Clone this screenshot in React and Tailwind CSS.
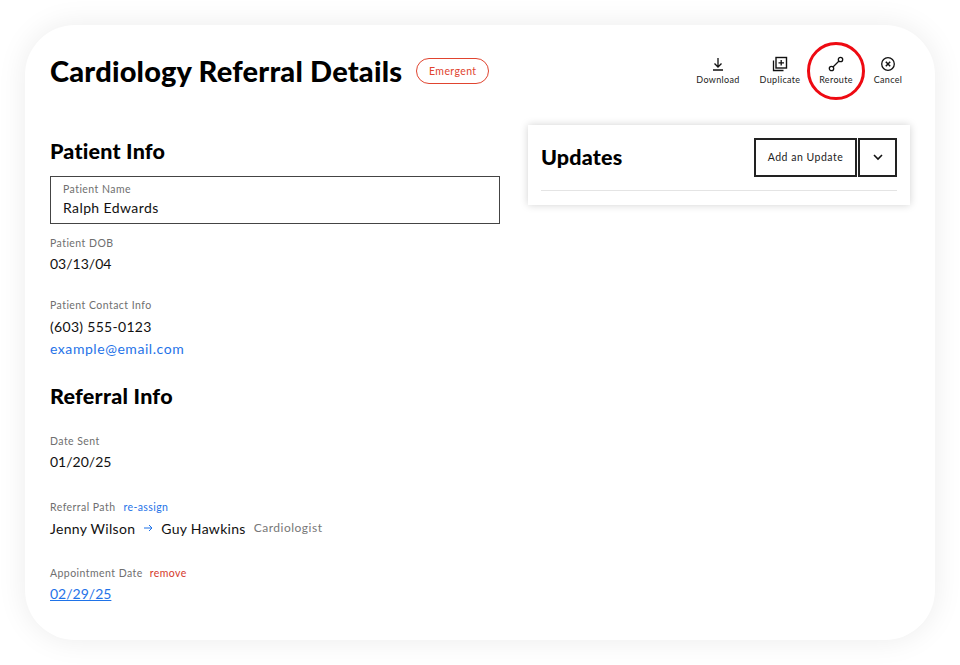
import React from "react";

const F = { fontFamily: '"Lato", "Noto Sans", sans-serif' };

function Label({ children }) {
  return <div className="text-[10.5px] leading-[14px] tracking-[0.45px] text-[#6f6f6f]">{children}</div>;
}
function Action({ label, w, children, circled }) {
  return (
    <div className={`relative flex flex-col items-center ${w}`}>
      <svg width="16" height="16" viewBox="0 0 16 16" fill="none" stroke="#111" strokeWidth="1.3" className="mb-[1px]">{children}</svg>
      <div className="text-[9px] leading-[14px] tracking-[0.35px] text-[#222] whitespace-nowrap">{label}</div>
      {circled && <div className="absolute left-1/2 top-[calc(50%-1px)] -translate-x-1/2 -translate-y-1/2 w-[58px] h-[58px] rounded-full border-[3px] border-[#ee0a12]" />}
    </div>
  );
}

export default function App() {
  return (
    <div className="w-[960px] h-[665px] bg-white p-[25px] overflow-hidden" style={F}>
      <div className="w-[910px] h-[615px] bg-white rounded-[50px] shadow-[0_0_30px_rgba(0,0,0,0.08)] pl-[25px] pr-[25px] pt-[29px]">
        <div className="flex items-start justify-between">
          <div className="flex items-center gap-[14px] h-[34px]">
            <h1 className="text-[29px] leading-[34px] font-black tracking-[0.2px] text-black whitespace-nowrap">Cardiology Referral Details</h1>
            <span className="h-[26px] w-[73px] pt-[1px] flex items-center justify-center rounded-full border-[1.5px] border-[#e0442f] text-[#e0442f] text-[10.5px] tracking-[0.4px]">Emergent</span>
          </div>
          <div className="flex items-start pt-[2px] pr-[7px]">
            <Action label="Download" w="w-[42px] mr-[20px]">
              <path d="M8 2v9M4.5 7.5 8 11l3.5-3.5M3 14h10" />
            </Action>
            <Action label="Duplicate" w="w-[42px] mr-[18px]">
              <path d="M1.5 4.5v10h10" />
              <rect x="4" y="1.5" width="10.5" height="10.5" strokeWidth="1.4" />
              <path d="M9.2 4v5.5M6.5 6.8H12" />
            </Action>
            <Action label="Reroute" w="w-[34px] mr-[20px]" circled>
              <circle cx="3.5" cy="12.5" r="2.2" />
              <circle cx="12.5" cy="3.5" r="2.2" />
              <path d="M5 11 11 5" />
            </Action>
            <Action label="Cancel" w="w-[30px]">
              <circle cx="8" cy="8" r="6.3" />
              <path d="M5.8 5.8l4.4 4.4M10.2 5.8l-4.4 4.4" strokeWidth="1.5" />
            </Action>
          </div>
        </div>

        <div className="flex mt-[37px]">
          <div className="w-[450px] shrink-0 pt-[13px]">
            <h2 className="text-[21.5px] leading-[26px] font-black tracking-[0.2px] text-black">Patient Info</h2>
            <div className="mt-[12px] h-[48px] border border-[#444] pl-[12px] pt-[5px]">
              <Label>Patient Name</Label>
              <div className="text-[14px] leading-[20px] tracking-[0.4px] text-[#111] mt-[2px]">Ralph Edwards</div>
            </div>
            <div className="mt-[12px]"><Label>Patient DOB</Label></div>
            <div className="text-[14px] leading-[20px] text-[#111] mt-[4px]">03/13/04</div>
            <div className="mt-[24px]"><Label>Patient Contact Info</Label></div>
            <div className="text-[14px] leading-[20px] tracking-[0.3px] text-[#111] mt-[5px]">(603) 555-0123</div>
            <div className="text-[14px] leading-[20px] tracking-[0.55px] text-[#1f73e8] mt-[2px]">example@email.com</div>
            <h2 className="mt-[24px] text-[21.5px] leading-[26px] font-black tracking-[0.25px] text-black">Referral Info</h2>
            <div className="mt-[25px]"><Label>Date Sent</Label></div>
            <div className="text-[14px] leading-[20px] text-[#111] mt-[4px]">01/20/25</div>
            <div className="mt-[28px] flex gap-[8px] items-center">
              <Label>Referral Path</Label>
              <span className="text-[10.5px] leading-[14px] tracking-[0.4px] text-[#1f73e8]">re-assign</span>
            </div>
            <div className="flex items-center mt-[4px] h-[20px]">
              <span className="text-[14px] tracking-[0.3px] text-[#111]">Jenny Wilson</span>
              <svg width="10" height="8" viewBox="0 0 10 8" fill="none" stroke="#1f73e8" strokeWidth="1" className="mx-[8px]"><path d="M1 4h8M6 1l3 3-3 3" /></svg>
              <span className="text-[14px] tracking-[0.3px] text-[#111]">Guy Hawkins</span>
              <span className="ml-[8px] text-[12px] tracking-[0.5px] text-[#777]">Cardiologist</span>
            </div>
            <div className="mt-[28px] flex gap-[7px] items-center">
              <Label>Appointment Date</Label>
              <span className="text-[10.5px] leading-[14px] tracking-[0.4px] text-[#d5392b]">remove</span>
            </div>
            <div className="text-[14px] leading-[20px] text-[#1f73e8] mt-[4px] underline">02/29/25</div>
          </div>

          <div className="ml-[28px] w-[383px] h-[80px] bg-white shadow-[0_0_8px_rgba(0,0,0,0.18)] pl-[13px] pr-[13px] pt-[13px]">
            <div className="flex items-center justify-between h-[39px]">
              <h2 className="text-[21.5px] font-black tracking-[0.2px] text-black">Updates</h2>
              <div className="flex gap-[1px]">
                <div className="w-[103px] h-[39px] border-2 border-[#222] flex items-center justify-center text-[10.5px] tracking-[0.5px] text-[#222]">Add an Update</div>
                <div className="w-[39px] h-[39px] border-2 border-[#222] flex items-center justify-center">
                  <svg width="10" height="7" viewBox="0 0 10 7" fill="none" stroke="#111" strokeWidth="1.6"><path d="M1 1l4 4 4-4" /></svg>
                </div>
              </div>
            </div>
            <div className="mt-[13px] h-px bg-[#e4e4e4]" />
          </div>
        </div>
      </div>
    </div>
  );
}
